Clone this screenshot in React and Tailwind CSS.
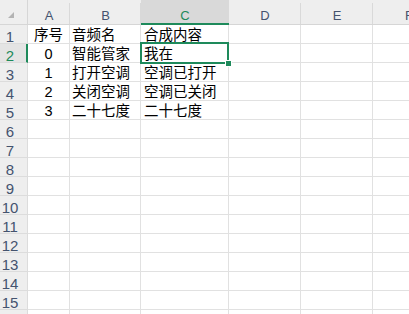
import React from "react";

const cols = ["A", "B", "C", "D", "E", "F"];

const data = [
	["序号", "音频名", "合成内容"],
	["0", "智能管家", "我在"],
	["1", "打开空调", "空调已打开"],
	["2", "关闭空调", "空调已关闭"],
	["3", "二十七度", "二十七度"],
];

// 15 numbered rows, plus the top of row 16 peeking in at the bottom edge
const rowNums = Array.from({ length: 16 }, (_, i) => i + 1);

const App = () => {
	return (
		<div className="relative w-[409px] h-[314px] overflow-hidden bg-white">
			<div className="grid w-[445px] grid-cols-[28px_42px_71px_88px_72px_72px_72px]">
				{/* header row */}
				<div className="relative h-[25px] bg-[#eeeeee] border-b border-r border-[#d6d6d6]">
					<svg width="20" height="20" viewBox="0 0 20 20" className="absolute left-0 top-0">
						<polygon points="14,12 14,18 8,18" fill="#b3b3b3" />
					</svg>
				</div>
				{cols.map((c) => (
					<div
						key={c}
						className={
							c === "C"
								? "relative h-[25px] bg-[#d9d9d9] border-b-2 border-[#1e8a5b] text-center text-[13px] leading-[16px] pt-[8px] text-[#1e8a5b] font-['Liberation_Sans',sans-serif]"
								: "relative h-[25px] bg-[#eeeeee] border-b border-[#d6d6d6] text-center text-[13px] leading-[16px] pt-[8px] text-[#44536e] font-['Liberation_Sans',sans-serif] after:absolute after:right-0 after:top-[3px] after:bottom-0 after:w-px after:bg-[#d9d9d9]"
						}>
						{c}
					</div>
				))}

				{/* body rows */}
				{rowNums.map((n) => {
					const row = data[n - 1] || [];
					const active = n === 2;
					return (
						<React.Fragment key={n}>
							<div
								className={
									active
										? "h-[19px] bg-[#e4e4e4] border-b border-[#dcdcdc] border-r-2 border-r-[#1e8a5b] pr-[6px] text-center text-[15px] leading-[15px] pt-[4px] text-[#1e8a5b] font-['Liberation_Sans',sans-serif]"
										: "h-[19px] bg-[#eeeeee] border-b border-r border-[#dcdcdc] pr-[7px] text-center text-[15px] leading-[15px] pt-[4px] text-[#44536e] font-['Liberation_Sans',sans-serif]"
								}>
								{n <= 15 ? n : ""}
							</div>
							<div className="h-[19px] border-b border-r border-[#e1e1e1] text-center text-[14.5px] leading-[18px] pt-[1px] text-black font-['Liberation_Sans','Noto_Sans_CJK_SC',sans-serif]">
								{row[0]}
							</div>
							<div className="h-[19px] border-b border-r border-[#e1e1e1] pl-[2px] text-[14.5px] leading-[18px] text-black whitespace-nowrap font-['Noto_Sans_CJK_SC',sans-serif]">
								{row[1]}
							</div>
							<div className="h-[19px] border-b border-r border-[#e1e1e1] pl-[3px] text-[14.5px] leading-[18px] text-black whitespace-nowrap font-['Noto_Sans_CJK_SC',sans-serif]">
								{row[2]}
							</div>
							<div className="h-[19px] border-b border-r border-[#e1e1e1]"></div>
							<div className="h-[19px] border-b border-r border-[#e1e1e1]"></div>
							<div className="h-[19px] border-b border-r border-[#e1e1e1]"></div>
						</React.Fragment>
					);
				})}
			</div>

			{/* active cell selection */}
			<div className="absolute left-[140px] top-[42px] w-[89px] h-[22px] border-2 border-[#1e8a5b]"></div>
			<div className="absolute left-[225px] top-[60px] w-[7px] h-[7px] bg-[#1e8a5b] border border-white"></div>
		</div>
	);
};

export default App;
